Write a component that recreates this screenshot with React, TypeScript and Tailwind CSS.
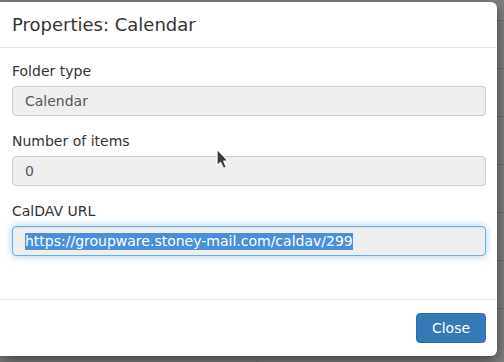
const FIELDS = [
  { label: "Folder type", value: "Calendar" },
  { label: "Number of items", value: "0" },
];

const ROW_LINES = [20, 68, 116, 164, 212, 260, 308];

function Field({ label, value }: { label: string; value: string }) {
  return (
    <div className="mb-[15px]">
      <label className="mb-[5px] block leading-[20px]">{label}</label>
      <div className="flex h-[30px] items-center rounded-[4px] border border-[#cccccc] bg-[#eeeeee] px-3 text-[#555555]">
        {value}
      </div>
    </div>
  );
}

function Pointer() {
  return (
    <svg className="absolute left-[215px] top-[147px]" width="16" height="24" viewBox="0 0 16 24">
      <path d="M2 2 L2 19 L5.5 15.5 L8.5 21.5 L11.5 20.2 L8.8 14.2 L13.5 14.2 Z" fill="#3b3b3b" stroke="#ffffff" strokeWidth="1.3" strokeLinejoin="round" />
    </svg>
  );
}

export default function App() {
  return (
    <div className="relative h-[362px] w-[504px] overflow-hidden bg-[#808080] font-['DejaVu_Sans',sans-serif] text-[14px] text-[#333333]">
      {/* page behind the backdrop */}
      <div className="absolute left-[257px] top-0 h-full w-px bg-[#737373]" />
      {ROW_LINES.map((y) => (
        <div key={y} className="absolute left-[497px] h-px w-[10px] bg-[#6e6e6e]" style={{ top: y }} />
      ))}

      <div className="absolute left-0 top-[2px] w-[497px] rounded-r-[6px] bg-white shadow-[0_5px_15px_rgba(0,0,0,0.5)]">
        <div className="border-b border-[#e5e5e5] py-[10px] pl-3 pr-[11px]">
          <h4 className="text-[18px] leading-[25px]">Properties: Calendar</h4>
        </div>

        <div className="pb-[28px] pl-3 pr-[11px] pt-[13px]">
          {FIELDS.map((f) => (
            <Field key={f.label} {...f} />
          ))}
          <div className="mb-[15px]">
            <label className="mb-[5px] block leading-[20px]">CalDAV URL</label>
            <div className="flex h-[30px] items-center rounded-[4px] border border-[#66afe9] bg-[#eeeeee] px-3 shadow-[inset_0_1px_1px_rgba(0,0,0,0.075),0_0_8px_rgba(102,175,233,0.6)]">
              <span className="bg-[#4a8fd8] leading-[17px] text-white">https://groupware.stoney-mail.com/caldav/299</span>
            </div>
          </div>
        </div>

        <div className="flex justify-end border-t border-[#e5e5e5] py-[13px] pl-3 pr-[11px]">
          <button className="h-[30px] w-[70px] rounded-[4px] border border-[#2e6da4] bg-[#337ab7] text-white">
            Close
          </button>
        </div>
      </div>

      <Pointer />
    </div>
  );
}
